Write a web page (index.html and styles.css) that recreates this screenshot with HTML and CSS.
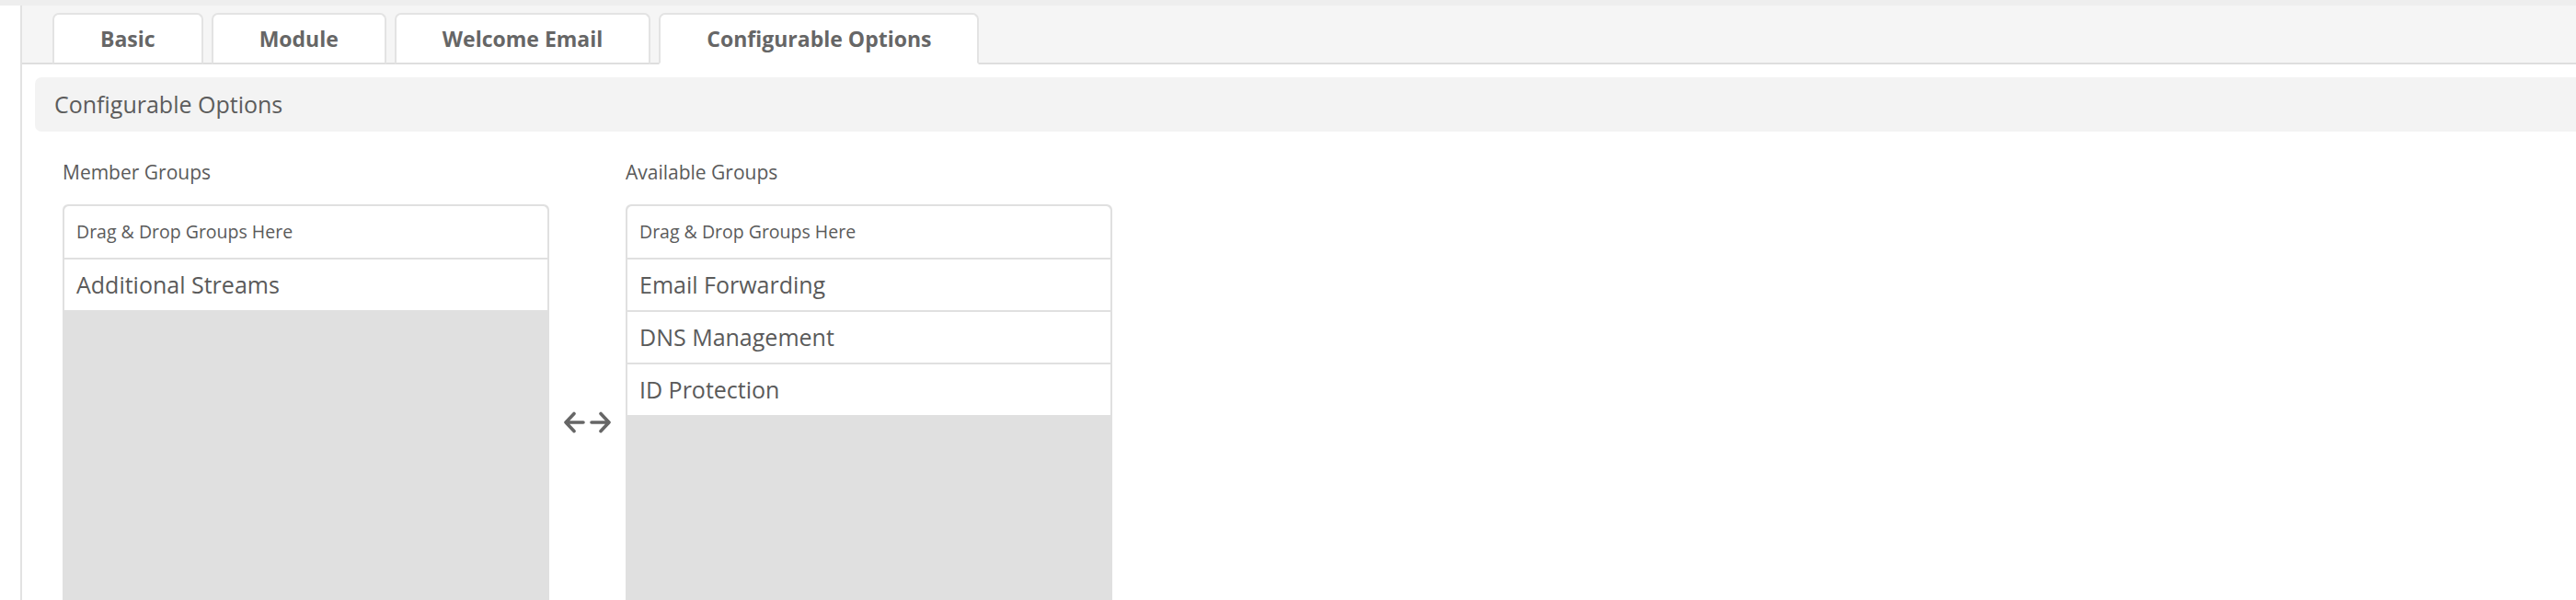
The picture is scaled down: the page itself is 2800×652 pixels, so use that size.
FILE: index.html
```html
<!DOCTYPE html>
<html lang="en">
<head>
    <meta charset="UTF-8">
    <meta name="viewport" content="width=device-width, initial-scale=1.0">
    <title>Configurable Options - Product Setup</title>
    <link rel="stylesheet" href="styles.css">
</head>
<body>
    <div class="top-strip"></div>

    <div class="product-tabs">
        <ul class="nav-tabs">
            <li><a href="#basic">Basic</a></li>
            <li><a href="#module">Module</a></li>
            <li><a href="#email">Welcome Email</a></li>
            <li class="active"><a href="#options">Configurable Options</a></li>
        </ul>

        <div class="tab-content">
            <div class="panel-heading">Configurable Options</div>

            <div class="groups">
                <div class="group-label">Member Groups</div>
                <div class="spacer"></div>
                <div class="group-label">Available Groups</div>

                <ul class="group-list" id="memberGroups">
                    <li class="group-hint">Drag &amp; Drop Groups Here</li>
                    <li class="group-item">Additional Streams</li>
                </ul>

                <div class="swap-icon">
                    <svg width="54" height="24" viewBox="0 0 54 24" fill="none" stroke="#666" stroke-width="3.6" stroke-linecap="round" stroke-linejoin="round">
                        <path d="M22 12H3M12 2.5L3 12l9 9.5"/>
                        <path d="M31 12h19M41 2.5l9 9.5-9 9.5"/>
                    </svg>
                </div>

                <ul class="group-list" id="availableGroups">
                    <li class="group-hint">Drag &amp; Drop Groups Here</li>
                    <li class="group-item">Email Forwarding</li>
                    <li class="group-item">DNS Management</li>
                    <li class="group-item">ID Protection</li>
                </ul>
            </div>
        </div>
    </div>
</body>
</html>
```

FILE: styles.css
```css
body {
    font-family: "Open Sans", "Liberation Sans", sans-serif;
    margin: 0;
    padding: 0;
    background-color: #fff;
    color: #555;
    overflow: hidden;
}

.top-strip {
    height: 6px;
    background-color: #eee;
}

.product-tabs {
    margin-left: 22px;
    border-left: 2px solid #e2e2e2;
    min-height: 700px;
}

/* tab bar */
.nav-tabs {
    list-style: none;
    margin: 0;
    padding: 8px 0 0 33px;
    display: flex;
    gap: 9px;
    background-color: #f5f5f5;
    border-bottom: 2px solid #dedede;
}

.nav-tabs li {
    margin-bottom: -2px;
}

.nav-tabs li a {
    display: block;
    height: 52px;
    line-height: 52px;
    padding: 0 50px;
    background-color: #fff;
    border: 2px solid #e3e3e3;
    border-radius: 7px 7px 0 0;
    border-bottom-color: #dedede;
    color: #666;
    font-size: 23px;
    font-weight: bold;
    text-decoration: none;
}

.nav-tabs li.active a {
    border-bottom-color: #fff;
}

/* content */
.tab-content {
    padding: 14px 0 0 14px;
}

.panel-heading {
    height: 59px;
    line-height: 59px;
    padding-left: 21px;
    background-color: #f3f3f3;
    border-radius: 7px 0 0 7px;
    font-size: 25px;
    color: #5c5c5c;
}

.groups {
    display: grid;
    grid-template-columns: 529px 83px 529px;
    margin: 29px 0 0 30px;
}

.group-label {
    font-size: 21px;
    line-height: 30px;
    margin-bottom: 20px;
    color: #5a5a5a;
}

.group-list {
    list-style: none;
    margin: 0;
    padding: 2px;
    height: 470px;
    display: flex;
    flex-direction: column;
    gap: 2px;
    background-color: #e0e0e0;
    border-radius: 6px 6px 0 0;
}

.group-list li {
    background-color: #fff;
    padding: 0 13px;
    color: #5a5a5a;
}

.group-hint {
    height: 56px;
    line-height: 56px;
    font-size: 19.5px;
    border-radius: 5px 5px 0 0;
}

.group-item {
    height: 55px;
    line-height: 55px;
    font-size: 25px;
    cursor: move;
}

.swap-icon {
    display: flex;
    align-items: center;
    justify-content: center;
}

.swap-icon svg {
    display: block;
}
```
